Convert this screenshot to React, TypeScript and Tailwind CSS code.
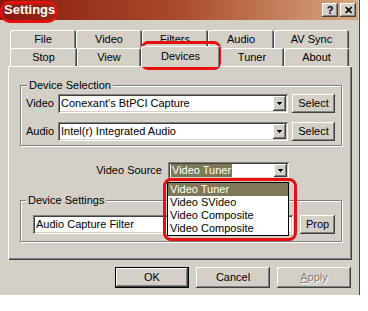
import React from "react";

const raised =
  "shadow-[inset_-1px_-1px_#404040,inset_1px_1px_#ffffff,inset_-2px_-2px_#808080,inset_2px_2px_#d4d0c8]";
const sunken =
  "shadow-[inset_1px_1px_#808080,inset_-1px_-1px_#ffffff,inset_2px_2px_#404040,inset_-2px_-2px_#d4d0c8]";

function Arrow() {
  return (
    <div className={`w-[13px] h-full bg-[#d4d0c8] ${raised} flex items-center justify-center`}>
      <svg width="5" height="3" viewBox="0 0 5 3" shapeRendering="crispEdges">
        <path d="M0 0h5v1h-1v1h-1v1h-1v-1h-1v-1h-1z" fill="#000" />
      </svg>
    </div>
  );
}

function Combo({ cls, children }: { cls: string; children: React.ReactNode }) {
  return (
    <div className={`flex bg-white p-[2px] ${sunken} ${cls}`}>
      <div className="flex-1 flex items-center pl-[1px] overflow-hidden whitespace-nowrap">{children}</div>
      <Arrow />
    </div>
  );
}

function Btn({ cls, children }: { cls: string; children: React.ReactNode }) {
  return (
    <div className={`flex items-center justify-center bg-[#d4d0c8] ${raised} ${cls}`}>{children}</div>
  );
}

const tabCls =
  "h-[18px] flex items-center justify-center rounded-t-[2px] shadow-[inset_1px_1px_#ffffff,inset_-1px_0_#404040,inset_-2px_0_#808080]";

function Annot({ cls }: { cls: string }) {
  return <div className={`absolute border-[3px] border-[#e41010] pointer-events-none ${cls}`} />;
}

export default function App() {
  return (
    <div className="w-[368px] h-[311px] bg-white [font-family:'Liberation_Sans',Arial,sans-serif] text-[11px] text-black leading-[13px]">
      <div className="relative w-[360px] h-[295px] bg-[#d4d0c8] border-r border-[#404040] flex flex-col">
        {/* Title bar */}
        <div className="w-[358px] h-[20px] flex items-center pl-[4px] pr-[2px] bg-gradient-to-r from-[#8a180c] via-[#a84a2c] to-[#d8a880]">
          <span className="text-white font-bold text-[13px] leading-[16px] flex-1">Settings</span>
          <div className="flex gap-[2px]">
            <Btn cls="w-[16px] h-[14px] font-bold text-[11px]">?</Btn>
            <Btn cls="w-[16px] h-[14px] font-bold text-[11px]">✕</Btn>
          </div>
        </div>

        {/* Tabs row 1 */}
        <div className="flex ml-[10px] mt-[10px]">
          <div className={`${tabCls} w-[66px]`}>File</div>
          <div className={`${tabCls} w-[66px]`}>Video</div>
          <div className={`${tabCls} w-[66px]`}>Filters</div>
          <div className={`${tabCls} w-[66px]`}>Audio</div>
          <div className={`${tabCls} w-[75px]`}>AV Sync</div>
        </div>
        {/* Tabs row 2 */}
        <div className="flex ml-[10px] h-[18px] items-end">
          <div className={`${tabCls} w-[67px]`}>Stop</div>
          <div className={`${tabCls} w-[64px]`}>View</div>
          <div className="relative z-10 h-[21px] -mb-[1px] w-[79px] flex items-center justify-center pb-[1px] bg-[#d4d0c8] rounded-t-[2px] shadow-[inset_1px_1px_#ffffff,inset_-1px_0_#404040,inset_-2px_0_#808080]">
            Devices
          </div>
          <div className={`${tabCls} w-[64px]`}>Tuner</div>
          <div className={`${tabCls} w-[65px]`}>About</div>
        </div>

        {/* Panel */}
        <div className="ml-[8px] w-[344px] h-[194px] flex flex-col pt-[19px] shadow-[inset_1px_1px_#ffffff,inset_-1px_-1px_#404040,inset_-2px_-2px_#808080]">
          {/* Device Selection */}
          <div className="relative ml-[12px] w-[322px] h-[61px] border border-[#808080] shadow-[1px_1px_0_#ffffff,inset_1px_1px_0_#ffffff] flex flex-col pt-[8px] gap-[9px]">
            <span className="absolute -top-[7px] left-[6px] bg-[#d4d0c8] px-[2px]">Device Selection</span>
            <div className="flex items-center pl-[5px]">
              <span className="w-[32px]">Video</span>
              <Combo cls="w-[230px] h-[19px]">Conexant's BtPCI Capture</Combo>
              <Btn cls="ml-[4px] w-[43px] h-[19px]">Select</Btn>
            </div>
            <div className="flex items-center pl-[5px]">
              <span className="w-[32px]">Audio</span>
              <Combo cls="w-[230px] h-[19px]">Intel(r) Integrated Audio</Combo>
              <Btn cls="ml-[4px] w-[43px] h-[19px]">Select</Btn>
            </div>
          </div>

          {/* Video Source */}
          <div className="flex items-center mt-[16px] h-[17px]">
            <span className="w-[154px] text-right">Video Source</span>
            <Combo cls="ml-[6px] w-[121px] h-[17px]">
              <span className="bg-[#7f7858] text-white px-[1px]">Video Tuner</span>
            </Combo>
          </div>

          {/* Device Settings */}
          <div className="relative mt-[21px] ml-[12px] w-[322px] h-[42px] border border-[#808080] shadow-[1px_1px_0_#ffffff,inset_1px_1px_0_#ffffff] flex items-start pt-[14px]">
            <span className="absolute -top-[7px] left-[5px] bg-[#d4d0c8] px-[2px]">Device Settings</span>
            <div className={`ml-[12px] w-[260px] h-[19px] bg-white p-[2px] pl-[3px] flex items-center ${sunken}`}>
              Audio Capture Filter
            </div>
            <Btn cls="ml-[7px] w-[35px] h-[19px]">Prop</Btn>
          </div>
        </div>

        {/* Bottom buttons */}
        <div className="flex ml-[115px] mt-[7px] gap-[7px]">
          <Btn cls="w-[74px] h-[21px] outline outline-1 outline-black -outline-offset-1 border border-black">OK</Btn>
          <Btn cls="w-[74px] h-[21px]">Cancel</Btn>
          <Btn cls="w-[74px] h-[21px] text-[#808080] [text-shadow:1px_1px_0_#ffffff]">
            <span>
              <span className="underline">A</span>pply
            </span>
          </Btn>
        </div>

        {/* Dropdown list (overlay) */}
        <div className="absolute left-[167px] top-[182px] w-[122px] border border-black bg-white flex flex-col">
          <div className="h-[13px] px-[2px] bg-[#7f7858] text-white">Video Tuner</div>
          <div className="h-[13px] px-[2px]">Video SVideo</div>
          <div className="h-[13px] px-[2px]">Video Composite</div>
          <div className="h-[13px] px-[2px]">Video Composite</div>
        </div>

        {/* Red annotations */}
        <Annot cls="left-[0px] top-[1px] w-[58px] h-[22px] rounded-[10px]" />
        <Annot cls="left-[141px] top-[41px] w-[80px] h-[29px] rounded-[7px]" />
        <Annot cls="left-[163px] top-[178px] w-[134px] h-[63px] rounded-[8px]" />
      </div>
    </div>
  );
}
